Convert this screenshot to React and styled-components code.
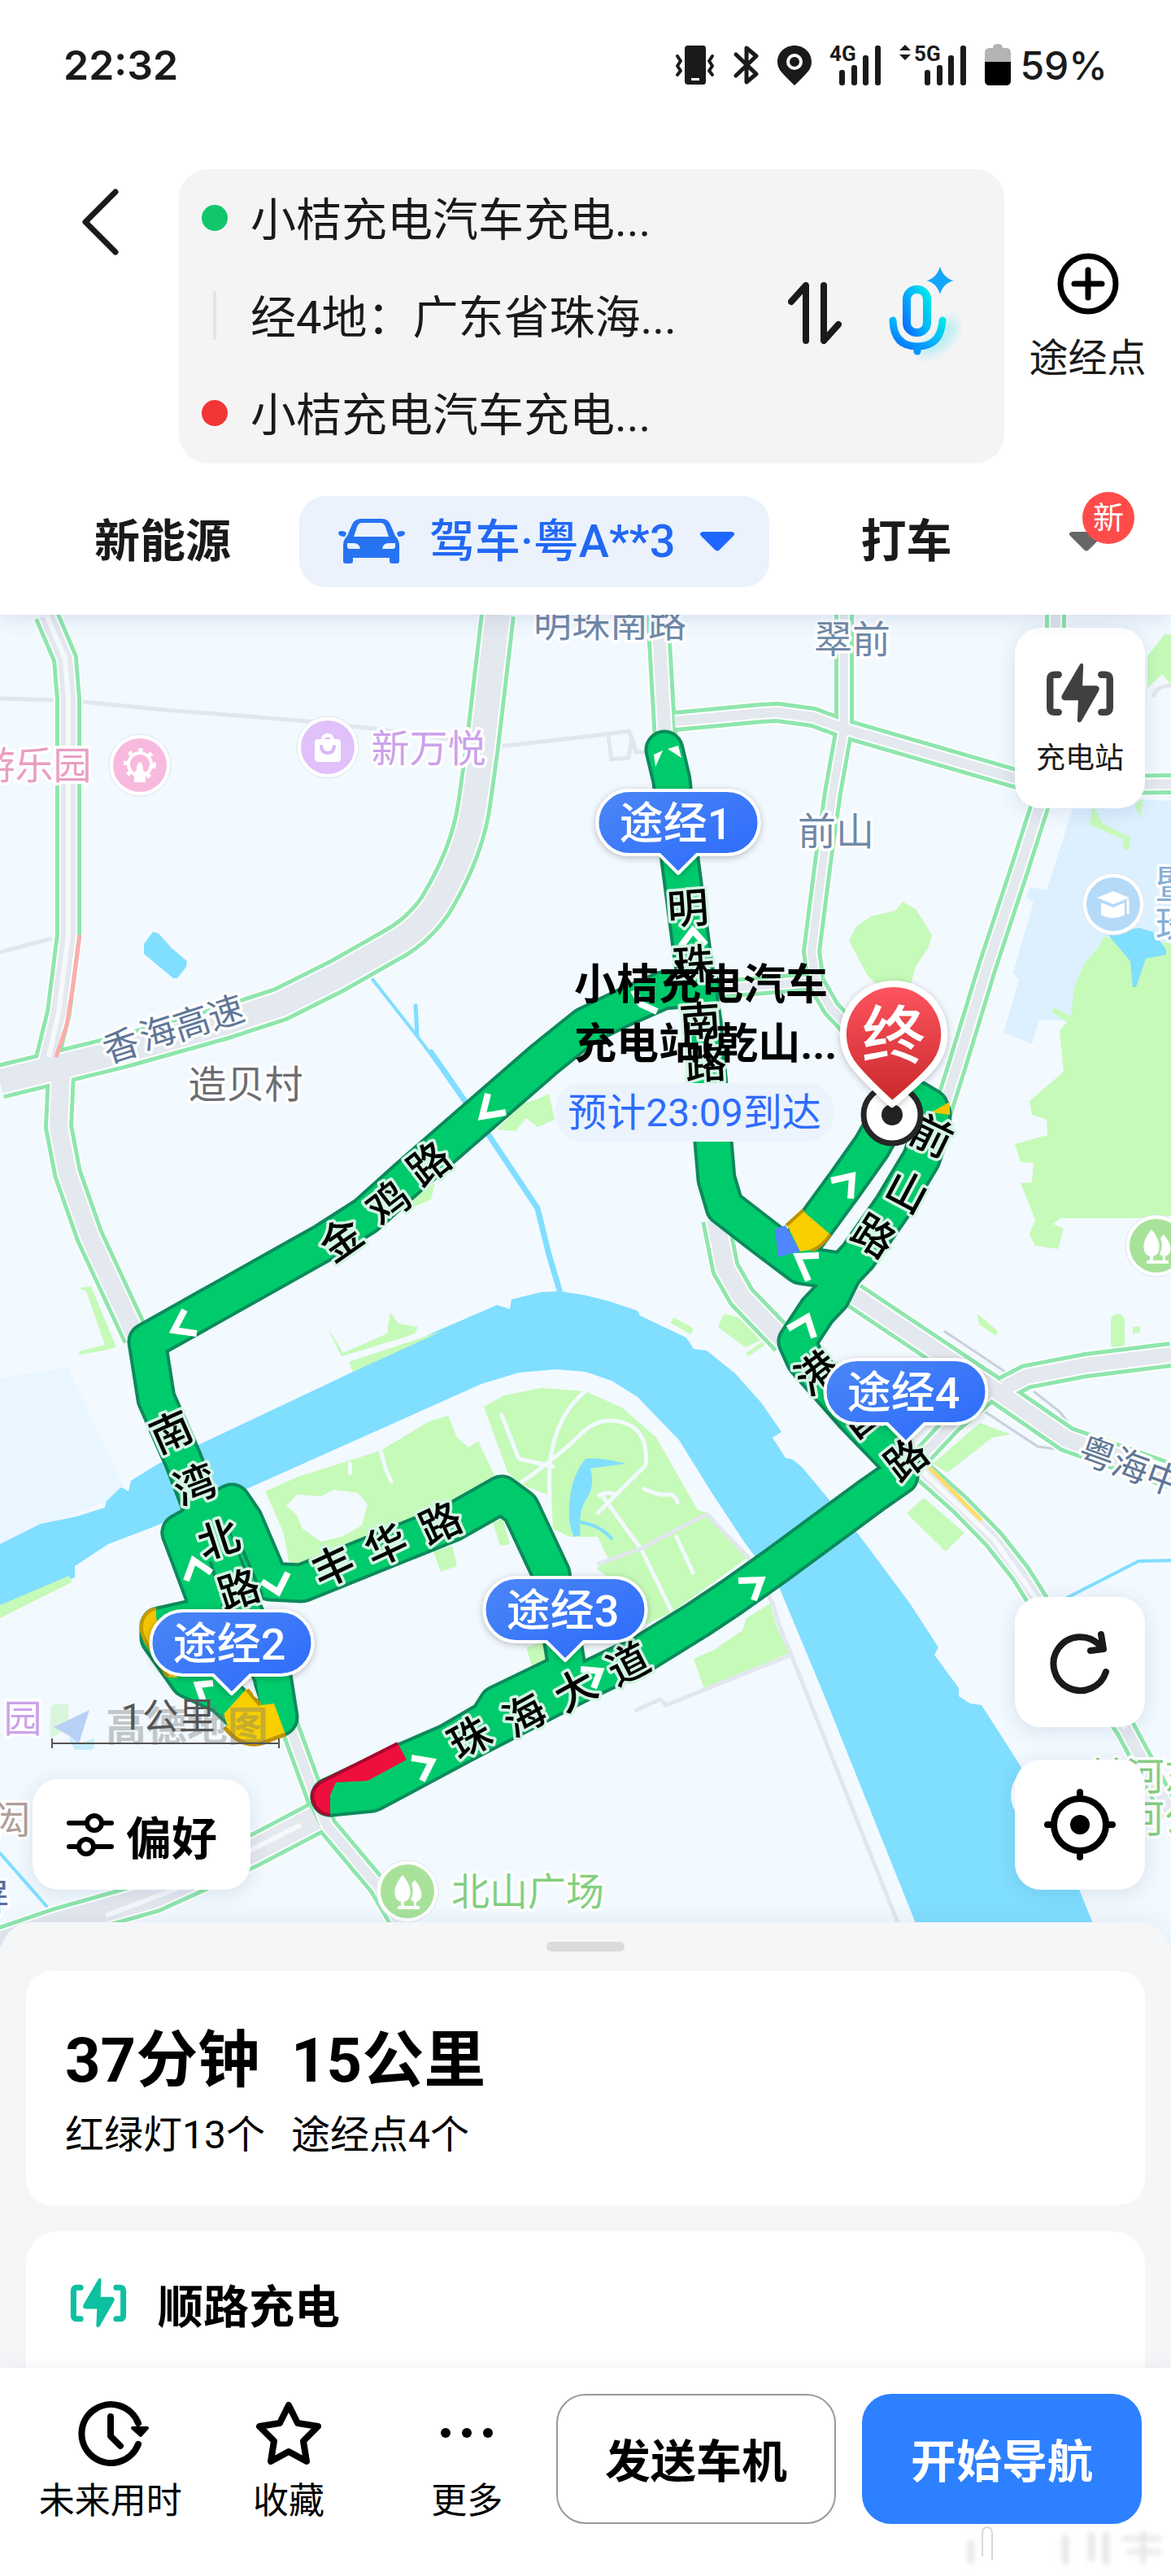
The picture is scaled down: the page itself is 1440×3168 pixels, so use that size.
import styled, { createGlobalStyle } from "styled-components";

const GlobalStyle = createGlobalStyle`
  * {
    box-sizing: border-box;
  }
  body {
    margin: 0;
    background-color: #fff;
    color: #1a1a1a;
    font-family: Roboto, "Noto Sans CJK SC", sans-serif;
  }
  button {
    font-family: inherit;
    color: inherit;
    border: none;
    padding: 0;
    background: none;
    cursor: pointer;
  }
  svg {
    display: block;
    flex-shrink: 0;
  }
`;

const Page = styled.div`
  display: flex;
  flex-direction: column;
  min-height: 100vh;
`;

const Header = styled.header`
  position: relative;
  z-index: 2;
  background-color: #fff;
  padding-bottom: 34px;
  box-shadow: 0 4px 24px rgba(60, 90, 140, 0.16);
`;

// STATUS BAR
const StatusBar = styled.div`
  display: flex;
  justify-content: space-between;
  align-items: center;
  height: 160px;
  padding: 0 78px;
`;

const Clock = styled.time`
  font-family: Inter, sans-serif;
  font-size: 50px;
  font-weight: 600;
`;

const StatusIcons = styled.div`
  display: flex;
  align-items: center;
  gap: 22px;
`;

const Battery = styled.div`
  display: flex;
  align-items: center;
  gap: 10px;
  font-family: Inter, sans-serif;
  font-size: 48px;
  font-weight: 500;
`;

// ROUTE SEARCH
const SearchArea = styled.div`
  display: flex;
  margin-top: 48px;
  padding-left: 88px;
`;

const BackButton = styled.button`
  align-self: flex-start;
  width: 132px;
  padding: 24px 12px;
`;

const StopsBox = styled.div`
  flex: 1;
  display: flex;
  align-items: center;
  justify-content: space-between;
  background-color: #f4f4f4;
  border-radius: 36px;
  padding-right: 52px;
`;

const Stops = styled.ul`
  list-style: none;
  margin: 0;
  padding: 0 0 2px 28px;
`;

const Stop = styled.li`
  display: flex;
  align-items: center;
  gap: 28px;
  height: 120px;
`;

const StopMark = styled.span`
  width: 32px;
  height: 32px;
  border-radius: 50%;
  background-color: ${(props) => props.color};
`;

const StopLine = styled.span`
  width: 4px;
  height: 60px;
  margin: 0 14px;
  background-color: #e4e4e6;
`;

const StopName = styled.button`
  padding-top: 6px;
  font-size: 56px;
  line-height: 80px;
`;

const StopTools = styled.div`
  display: flex;
  align-items: center;
  gap: 56px;
  padding-bottom: 8px;
`;

const AddStop = styled.button`
  display: flex;
  flex-direction: column;
  align-items: center;
  gap: 20px;
  width: 205px;
  padding-top: 102px;
  font-size: 48px;
  line-height: 66px;
`;

// TRAVEL MODES
const Modes = styled.nav`
  display: flex;
  align-items: center;
  margin-top: 40px;
  padding: 0 82px 0 116px;
`;

const Mode = styled.button`
  font-size: 56px;
  font-weight: 700;
  line-height: 80px;
`;

const ActiveMode = styled(Mode)`
  display: flex;
  align-items: center;
  gap: 30px;
  height: 112px;
  margin: 0 112px 0 84px;
  padding: 0 42px 0 48px;
  border-radius: 32px;
  background-color: #ebf2fc;
  color: #2168f5;
  font-weight: 500;
`;

const MoreModes = styled.button`
  position: relative;
  width: 44px;
  margin-left: auto;
`;

const NewBadge = styled.span`
  position: absolute;
  left: 17px;
  bottom: 10px;
  width: 64px;
  height: 64px;
  border-radius: 50%;
  background-color: #ff4c4a;
  color: #fff;
  font-size: 38px;
  line-height: 64px;
  text-align: center;
`;

// MAP
const MapSection = styled.main`
  position: relative;
  flex: 1;
  min-height: 1200px;
  overflow: hidden;
  background-color: #f2f9ff;
`;

const MapCanvas = styled.svg`
  position: absolute;
  inset: 0;
  width: 100%;
  height: 100%;
`;

const FloatCard = styled.button`
  display: flex;
  flex-direction: column;
  align-items: center;
  justify-content: center;
  gap: 16px;
  width: 160px;
  height: ${(props) => (props.$tall ? "222px" : "160px")};
  padding-top: ${(props) => (props.$tall ? "8px" : "0")};
  border-radius: 32px;
  background-color: #fff;
  box-shadow: 0 4px 24px rgba(60, 80, 120, 0.14);
  font-size: 36px;
  line-height: 52px;
`;

const TopTools = styled.div`
  position: absolute;
  top: 16px;
  right: 32px;
`;

const SideTools = styled.div`
  position: absolute;
  right: 32px;
  bottom: 76px;
  display: flex;
  flex-direction: column;
  gap: 40px;
`;

const PreferButton = styled.button`
  position: absolute;
  left: 40px;
  bottom: 76px;
  display: flex;
  align-items: center;
  justify-content: center;
  gap: 14px;
  width: 268px;
  height: 136px;
  border-radius: 32px;
  background-color: #fff;
  box-shadow: 0 4px 24px rgba(60, 80, 120, 0.14);
  font-size: 56px;
  font-weight: 700;
  color: #000;
`;

// BOTTOM SHEET
const Sheet = styled.section`
  position: relative;
  margin-top: -36px;
  height: 548px;
  padding: 24px 32px 0;
  border-radius: 40px 40px 0 0;
  background-color: #f5f6f8;
  box-shadow: 0 -4px 24px rgba(60, 90, 140, 0.08);
  overflow: hidden;
  color: #000;
`;

const Handle = styled.div`
  width: 96px;
  height: 12px;
  margin: 0 auto 24px;
  border-radius: 6px;
  background-color: #dadbdd;
`;

const Summary = styled.div`
  display: flex;
  gap: 32px;
  height: 288px;
  padding: 56px 48px;
  border-radius: 32px;
  background-color: #fff;
`;

const SummaryItem = styled.div`
  h2 {
    margin: 0;
    font-size: 76px;
    font-weight: 700;
    line-height: 108px;
  }
  p {
    margin: 4px 0 0;
    font-size: 48px;
    line-height: 68px;
  }
`;

const ChargeCard = styled.div`
  display: flex;
  align-items: center;
  gap: 38px;
  margin-top: 32px;
  height: 176px;
  padding: 0 54px;
  border-radius: 40px 40px 0 0;
  background-color: #fff;
  h3 {
    margin: 0;
    font-size: 56px;
    font-weight: 700;
  }
`;

const Footer = styled.footer`
  position: relative;
  display: flex;
  align-items: flex-start;
  height: 256px;
  padding: 32px 36px 0 26px;
  background-color: #fff;
  box-shadow: 0 -4px 20px rgba(60, 80, 120, 0.06);
  color: #000;
`;

const Actions = styled.div`
  flex: 1;
  display: flex;
`;

const Action = styled.button`
  flex: 1;
  display: flex;
  flex-direction: column;
  align-items: center;
  gap: 4px;
  font-size: 44px;
  line-height: 64px;
`;

const MainButton = styled.button`
  width: 344px;
  height: 160px;
  margin-left: ${(props) => (props.$primary ? "32px" : "0")};
  padding-bottom: 4px;
  border: 2px solid ${(props) => (props.$primary ? "#2d80ff" : "#999")};
  border-radius: 36px;
  background-color: ${(props) => (props.$primary ? "#2d80ff" : "#fff")};
  color: ${(props) => (props.$primary ? "#fff" : "#000")};
  font-size: 56px;
  font-weight: 700;
`;

const Smudge = styled.svg`
  position: absolute;
  right: 0;
  bottom: 8px;
`;

// ICONS
const Signal = ({ label, arrows }) => (
  <svg width={arrows ? 82 : 64} height="52" fill="#1a1a1a" overflow="visible">
    <text
      x={arrows ? 18 : 0}
      y="21"
      fontFamily="Roboto, sans-serif"
      fontWeight="700"
      fontSize="26"
    >
      {label}
    </text>
    {arrows && <path d="M0 8l7-7 7 7zM0 13l7 7 7-7z" />}
    <g transform={`translate(${arrows ? 31 : 12} 2)`}>
      <rect x="0" y="30" width="7" height="19" rx="3" />
      <rect x="15" y="24" width="7" height="25" rx="3" />
      <rect x="29" y="12" width="7" height="37" rx="3" />
      <rect x="44" y="0" width="7" height="49" rx="3" />
    </g>
  </svg>
);

const ChargeIcon = ({ size, color }) => (
  <svg width={size} height={size * 0.9} viewBox="0 0 80 72">
    <g fill="none" stroke={color} strokeWidth="8" strokeLinecap="round">
      <path d="M15 14h-5q-5 0-5 5v34q0 5 5 5h5" />
      <path d="M65 14h5q5 0 5 5v34q0 5-5 5h-5" />
    </g>
    <path
      d="M40 2q3-3 4 1l-1 24h16q5 1 3 6L42 68q-3 4-5 0l1-24H22q-5-1-3-6z"
      fill={color}
    />
  </svg>
);

// MAP DATA
const roads = [
  { w: 32, d: "M57 756L80 810 84 860 84 1150 72 1245 56 1310" },
  {
    w: 44,
    d: "M612 756L593 918 583 990Q574 1050 535 1114Q514 1145 480 1163L415 1200 345 1235 275 1258 150 1293 0 1330",
  },
  { w: 36, d: "M75 1320L72 1386 83 1443 110 1520 168 1645" },
  { w: 30, d: "M809 756L818 910" },
  {
    w: 26,
    d: "M830 887L936 877 956 876 1000 882 1038 896 1248 957 1290 966 1440 964",
  },
  {
    w: 24,
    d: "M1038 756L1038 896 1024 975 1012 1060 998 1170 1003 1207 1022 1240 1050 1270",
  },
  { w: 24, d: "M890 1216L1000 1207" },
  { w: 26, d: "M1298 756L1298 880 1278 993 1253 1071 1214 1189 1178 1307 1155 1380" },
  { w: 36, d: "M880 1500L892 1560 912 1595 965 1650" },
  { w: 34, d: "M1050 1593L1150 1660 1228 1712 1312 1770 1440 1815" },
  { w: 32, d: "M1235 1707L1262 1693 1335 1679 1440 1666" },
  { w: 26, d: "M1125 1800L1170 1752 1215 1714" },
  { w: 28, d: "M1135 1810L1180 1850 1222 1893 1255 1935 1277 1970 1384 2126 1440 2230" },
  { w: 26, d: "M355 2120L388 2210 402 2245 465 2320 500 2380" },
  { w: 42, d: "M388 2236L308 2278 190 2332 70 2366 0 2390" },
];

const river =
  "0,1899 50,1874 94,1865 129,1854 131,1846 149,1829 158,1834 161,1821 195,1800 248,1775 411,1698 434,1687 537,1637 611,1605 627,1610 629,1598 666,1589 689,1588 720,1593 748,1600 784,1612 787,1618 844,1645 853,1659 869,1661 904,1689 936,1725 961,1761 950,1768 966,1793 975,1795 986,1804 1021,1846 1055,1886 1119,1972 1154,2026 1149,2035 1179,2076 1179,2086 1193,2095 1207,2097 1255,2172 1328,2326 1358,2400 1140,2400 1014,2086 959,1954 917,1899 878,1840 835,1771 784,1718 752,1698 720,1687 684,1684 638,1688 592,1702 308,1829 188,1878 133,1899 92,1926 92,1940 0,1974";

const parks = [
  "0,1974 85,1938 88,1946 0,1990",
  "96,1584 112,1582 143,1657 131,1660 98,1666 97,1662 129,1654 106,1588",
  "675,1345 682,1377 661,1386 647,1375 634,1391 611,1389 643,1357 660,1352",
  "535,1455 530,1475 505,1486 510,1471",
  "404,1636 409,1642 422,1664 476,1640 480,1614 490,1628 514,1632 510,1640 496,1645 420,1668",
  "429,1675 546,1636 434,1687",
  "326,1834 367,1816 468,1784 528,1748 551,1741 562,1768 576,1780 590,1771 608,1814 600,1850 551,1861 367,1925 355,1920 349,1886 337,1858",
  "595,1730 620,1716 666,1707 720,1711 766,1732 807,1768 858,1857 872,1861 920,1915 826,1983 795,1997 760,1950 734,1929 748,1917 735,1890 700,1890 680,1880 678,1840 640,1825 624,1810",
  "853,2040 878,2029 913,2005 918,1990 947,1972 955,2000 970,2033 866,2077",
  "533,1908 556,1901 562,1926 542,1933",
  "606,1872 618,1868 627,1899 615,1901",
  "647,2026 700,2008 700,2030 655,2050",
  "890,1616 913,1621 940,1646 917,1657 883,1632",
  "828,1620 853,1634 849,1641 825,1627",
  "941,1648 944,1652 920,1668 917,1664",
  "1202,1616 1227,1637 1225,1643 1204,1629",
  "1393,1632 1402,1631 1402,1639 1393,1640",
  "1147,1800 1205,1750 1243,1764 1220,1768 1165,1811",
  "1115,1861 1136,1842 1186,1885 1163,1908",
  "1110,1109 1126,1118 1146,1150 1142,1164 1126,1189 1119,1215 1083,1215 1067,1200 1044,1157 1053,1139 1071,1127 1101,1120",
  "1344,990 1356,1013 1390,1030 1388,1046 1381,1043 1381,1032 1340,1014",
  "1395,990 1402,1005 1406,982",
  "1440,780 1432,780 1411,807 1411,846 1429,829 1440,842",
  "1356,1152 1354,1161 1333,1186 1321,1214 1317,1250 1296,1239 1294,1245 1312,1257 1303,1268 1308,1318 1292,1332 1266,1354 1269,1371 1287,1377 1288,1396 1248,1407 1255,1429 1271,1430 1269,1454 1255,1455 1273,1500 1266,1518 1273,1532 1301,1536 1308,1511 1294,1505 1305,1498 1400,1498 1440,1495 1440,1160",
];

// every leg of the planned route, drawn as a casing and then a fill
const routeLegs = [
  "M817 922L826 960 836 1057 852 1179 864 1257 877 1404 881 1450 891 1484 940 1522 985 1556 1037 1564",
  "M862 1214L815 1218 765 1240 720 1262 669 1303 500 1450 450 1495 400 1527 181 1650 192 1720 225 1795 250 1860 285 1950 335 2061 343 2112 312 2122",
  "M222 1885L285 1848 300 1870 332 1945 371 1947 557 1872 617 1838 640 1855 678 1936 697 2050",
  "M222 1885L252 1965 250 1988 196 2000 196 2014 232 2065 275 2085 312 2120",
  "M406 2210L457 2205 571 2144 708 2073 795 2031 858 1992 900 1964 955 1925 1073 1838 1106 1815 1108 1800",
  "M406 2210L501 2165 552 2143 600 2115 612 2096 697 2055",
  "M1108 1800L1050 1740 990 1672 980 1650 1005 1612 1022 1594 1037 1564",
  "M1037 1564L1055 1545 1097 1485 1133 1425 1145 1390 1146 1370 1143 1362 1128 1353 1100 1365",
  "M985 1530L1005 1503 1038 1458 1072 1410 1090 1378",
];

const chevrons = [
  "837,1164 852,1144 868,1162",
  "779,1218 788,1235 808,1244",
  "600,1345 593,1373 622,1368",
  "227,1611 214,1636 242,1640",
  "1022,1452 1048,1446 1046,1474",
  "1007,1544 981,1545 994,1575",
  "969,1634 993,1620 1001,1645",
  "229,1944 238,1919 260,1934",
  "322,1945 342,1958 354,1934",
  "506,2162 531,2166 519,2190",
  "908,1944 936,1943 927,1968",
  "714,2053 738,2055 730,2076",
  "250,2092 243,2072 262,2070",
];

const routeNames = [
  ["明", 846, 1118, -4],
  ["珠", 853, 1187, -4],
  ["南", 861, 1257, -4],
  ["路", 868, 1309, -3],
  ["路", 528, 1432, -38],
  ["鸡", 478, 1480, -38],
  ["金", 420, 1525, -35],
  ["南", 211, 1762, -24],
  ["湾", 240, 1827, -21],
  ["北", 269, 1894, -18],
  ["路", 294, 1956, -18],
  ["丰", 410, 1927, -25],
  ["华", 475, 1901, -25],
  ["路", 542, 1874, -25],
  ["珠", 578, 2138, -29],
  ["海", 645, 2110, -29],
  ["大", 708, 2079, -29],
  ["道", 773, 2047, -27],
  ["前", 1145, 1398, 26],
  ["山", 1115, 1466, 28],
  ["路", 1074, 1521, 32],
  ["港", 1005, 1689, -36],
  ["昌", 1060, 1742, -38],
  ["路", 1115, 1795, -38],
];

const slantedNames = [
  ["香", 149, 1287, -18],
  ["海", 194, 1271, -18],
  ["高", 236, 1259, -18],
  ["速", 278, 1246, -18],
  ["粤", 1349, 1789, 20],
  ["海", 1390, 1804, 20],
  ["中", 1431, 1820, 20],
];

const places = [
  ["明珠南路", 750, 766, "#7189a8"],
  ["翠前", 1048, 786, "#7189a8"],
  ["前山", 1028, 1022, "#7189a8"],
  ["新万悦", 527, 920, "#cba2ea"],
  ["游乐园", 42, 941, "#ea9ec2"],
  ["造贝村", 302, 1333, "#6c6d72"],
  ["北山广场", 649, 2326, "#84cf80"],
  ["园", 28, 2113, "#cba2ea"],
  ["闳", 14, 2238, "#b0a09a"],
  ["屏", -12, 2333, "#5a6ea0"],
  ["暨", 1444, 1087, "#86aed6"],
  ["珠", 1444, 1137, "#86aed6"],
  ["前河东", 1408, 2184, "#86cf82"],
  ["前河公", 1408, 2236, "#86cf82"],
];

const waypoints = [
  ["途经1", 834, 970],
  ["途经2", 285, 1979],
  ["途经3", 695, 1938],
  ["途经4", 1114, 1670],
];

const Glyphs = ({ items, ...rest }) => (
  <g {...rest}>
    {items.map(([char, x, y, angle]) => (
      <text key={char + x} transform={`translate(${x} ${y}) rotate(${angle})`}>
        {char}
      </text>
    ))}
  </g>
);

const Waypoint = ({ name, x, y }) => (
  <g transform={`translate(${x} ${y})`} filter="url(#soft)">
    <path
      d="M-60 2H60a39 39 0 0 1 0 79H23L0 104-23 81H-60a39 39 0 0 1 0-79z"
      fill="url(#pinBlue)"
      stroke="#fff"
      strokeWidth="4"
      strokeLinejoin="round"
    />
    <text x="-3" y="43" fill="#fff" fontSize="54" fontWeight="500">
      {name}
    </text>
  </g>
);

const Poi = ({ x, y, color, children }) => (
  <g transform={`translate(${x} ${y})`}>
    <circle r="38" fill="#fff" stroke="#dde6ee" />
    <circle r="33" fill={color} />
    {children}
  </g>
);

const Trees = () => (
  <g fill="#fff">
    <path d="M-6-20q-12 14-9 26 2 7 9 7t9-7q3-12-9-26z" />
    <path d="M9-14q10 12 8 21-2 6-8 6-3 0-5-3 5-10 1-19z" />
    <path d="M-8 8h4v12h-4zM8 8h3v12H8zM-12 18h27v4h-27z" />
  </g>
);

const RouteMap = () => (
  <MapCanvas
    viewBox="0 756 1440 1644"
    preserveAspectRatio="xMidYMid slice"
    role="img"
    aria-label="驾车路线地图"
    fontFamily='Roboto, "Noto Sans CJK SC", sans-serif'
    textAnchor="middle"
    dominantBaseline="central"
  >
    <defs>
      <linearGradient id="pinBlue" x1="0" y1="0" x2="1" y2="1">
        <stop offset="0" stopColor="#4b87f6" />
        <stop offset="1" stopColor="#2b69fb" />
      </linearGradient>
      <linearGradient id="pinRed" x1="0" y1="0" x2="0" y2="1">
        <stop offset="0" stopColor="#ff5561" />
        <stop offset="1" stopColor="#c8282a" />
      </linearGradient>
      <filter id="soft" x="-20%" y="-20%" width="140%" height="150%">
        <feDropShadow dx="0" dy="2" stdDeviation="4" floodOpacity="0.25" />
      </filter>
    </defs>

    {/* land and water */}
    <polygon points="0,1695 83,1682 156,1836 0,1899" fill="#e9f6ff" />
    <polygon
      points="1324,980 1287,1095 1266,1091 1262,1104 1271,1109 1246,1196 1253,1205 1234,1270 1269,1284 1278,1254 1303,1255 1440,1255 1440,985"
      fill="#dcf0ff"
    />
    <polygon points={river} fill="#80deff" />
    <g fill="#c5fab8">
      {parks.map((points) => (
        <polygon key={points} points={points} />
      ))}
      <rect x="1366" y="1616" width="17" height="44" rx="8" />
    </g>
    <path
      d="M352 1852l13-14 30 2 15-8 30 4 12 14-7 26-25 14-25 6-23-16-8-18z"
      fill="#f2f9ff"
    />
    <path
      d="M468 1784l6 22 8 18M430 1798l1 16M616 1738l22 56M638 1794l44 10M590 1771l24 50M720 1711q-50 40-44 130M640 1824q50-36 74-60t54-14 26 52M794 1802l-60 60M741 1840l48 66 39 80M831 1888l22 48M735 1840q14-8 24 0M790 1830q20 10 30 8t14 12"
      fill="none"
      stroke="#f2f9ff"
      strokeWidth="5"
    />
    <path
      d="M770 1800q-34-8-50-6-18 22-20 58-2 22 6 38l8-2q-4-30 8-46 10-16 4-36z"
      fill="#80deff"
    />
    <g fill="none" stroke="#80deff" strokeLinecap="round">
      <path d="M457 1203L512 1273 540 1310" strokeWidth="4" />
      <path d="M511 1237L513 1273" strokeWidth="5" />
      <path d="M530 1294L601 1396 661 1486 675 1543 689 1590" strokeWidth="7" />
      <path d="M714 1872q24 4 38 20M0 2279L57 2344M1312 1965L1400 1920 1440 1919" strokeWidth="4" />
    </g>
    <polygon
      points="188,1146 195,1148 211,1166 230,1182 229,1189 218,1203 213,1203 177,1173 177,1161"
      fill="#80deff"
    />
    <polygon
      points="1363,1150 1400,1141 1418,1146 1434,1168 1434,1174 1409,1179 1397,1214 1393,1214 1390,1182"
      fill="#80deff"
    />

    {/* side streets */}
    <g fill="none" stroke="#e2e7ed" strokeWidth="5">
      <path d="M0 859L69 861M101 863L202 873 367 886 459 896 615 918 720 906 773 899 777 907 782 925 796 925M748 904l4 30 21-2 4-26M0 1171L64 1154" />
      <path d="M734 1924L789 1904 869 1862 922 1917 950 1972 959 2001 973 2035 1118 2400M973 2035L819 2097 812 2090 780 2104" />
      <path d="M1418 857q4-14 22-14" />
    </g>
    <g fill="none" stroke="#c8d0dc" strokeWidth="3">
      <path d="M1161 1637L1239 1689M1271 1711L1303 1736 1317 1754M1211 1736L1276 1779 1299 1782" />
    </g>

    {/* main roads */}
    <g fill="none" strokeLinejoin="round">
      {roads.map((road) => (
        <path key={road.d} d={road.d} stroke="#fff" strokeWidth={road.w + 4} />
      ))}
      {roads.map((road) => (
        <path key={road.d} d={road.d} stroke="#8fe6ae" strokeWidth={road.w} />
      ))}
      {roads.map((road) => (
        <path key={road.d} d={road.d} stroke="#fff" strokeWidth={road.w - 10} />
      ))}
      {roads.map((road) => (
        <path key={road.d} d={road.d} stroke="#e4e8ef" strokeWidth={road.w - 14} />
      ))}
      <path d="M98 1150L90 1211 82 1261 69 1300" stroke="#ffabab" strokeWidth="5" />
      <path d="M1138 1800L1207 1870" stroke="#ffdb6b" strokeWidth="5" />
      <path
        d="M57 756L80 810 84 860 84 1150 72 1245 60 1300M240 2310L370 2244M130 2356L240 2314M1135 1810L1222 1893 1277 1970 1384 2126"
        stroke="#f6f9fc"
        strokeWidth="6"
      />
    </g>

    {/* place labels */}
    <g fontSize="47" stroke="#fff" strokeWidth="7" strokeLinejoin="round" paintOrder="stroke">
      {places.map(([name, x, y, color]) => (
        <text key={name + y} x={x} y={y} fill={color}>
          {name}
        </text>
      ))}
      <Glyphs items={slantedNames} fill="#5f7797" fontSize="44" />
    </g>
    <Poi x={172} y={941} color="#f8b9de">
      <circle r="17" cy="-1" fill="none" stroke="#fff" strokeWidth="6" strokeDasharray="5 8" />
      <circle r="14" cy="-1" fill="none" stroke="#fff" strokeWidth="4" />
      <path d="M0-4q4 2 4 10l3 3v12H-7V9l3-3q0-8 4-10z" fill="#fff" />
    </Poi>
    <Poi x={403} y={919} color="#e0c1fa">
      <path d="M-16-6q0-4 4-4h4q1-7 8-7t8 7h4q4 0 4 4v20q0 4-4 4h-24q-4 0-4-4z" fill="#fff" />
      <path d="M-8-1q1 8 8 8t8-8" fill="none" stroke="#d9b8f6" strokeWidth="4" strokeLinecap="round" />
      <path d="M-4-10q0-2 4-2t4 2z" fill="#d9b8f6" />
    </Poi>
    <Poi x={1369} y={1112} color="#b5daf8">
      <path d="M0-16L20-8 0 0-20-8zM-15-2L0 4l14-6v15q-14 8-29 0z" fill="#fff" />
      <path d="M18-6v18" stroke="#fff" strokeWidth="3" />
    </Poi>
    <Poi x={1422} y={1532} color="#a8e29a">
      <Trees />
    </Poi>
    <Poi x={501} y={2326} color="#a8e29a">
      <Trees />
    </Poi>
    <circle cx="1282" cy="2208" r="39" fill="#fff" />

    {/* map brand under the scale */}
    <g opacity="0.6">
      <path d="M62 2102q0-6 6-6h16v28l-22 14z" fill="#c9f3c4" />
      <path d="M66 2124L110 2103 97 2144 84 2134z" fill="#8fb8f0" />
      <path d="M84 2136l14 8 18-6v8q0 6-6 6H92z" fill="#a8e4fb" />
    </g>

    {/* planned route */}
    <g fill="none" strokeLinejoin="round" strokeLinecap="round">
      {routeLegs.map((d) => (
        <path key={d} d={d} stroke="#0b8a5b" strokeWidth="49" />
      ))}
      {routeLegs.map((d) => (
        <path key={d} d={d} stroke="#00cb6c" strokeWidth="41" />
      ))}
      <path d="M259 1922l12 36M298 1905l24 56" stroke="#0b8a5b" strokeWidth="4" />
    </g>
    <path
      d="M192 1977Q172 1982 172 2002 172 2010 178 2020L204 2062 218 2064 192 1990z"
      fill="#f2c500"
    />
    <path
      d="M192 1978Q174 1983 174 2002 174 2010 180 2020L206 2062"
      fill="none"
      stroke="#c79a00"
      strokeWidth="4"
    />
    <polygon points="953,1511 966,1507 984,1539 957,1546" fill="#4f86ff" />
    <polygon points="968,1507 987,1489 1021,1518 1012,1528 998,1537 984,1539" fill="#f9cf00" />
    <path d="M967 1507L988 1488M1021 1518Q1012 1532 998 1538" stroke="#bd9200" strokeWidth="4" fill="none" />
    <polygon points="1145,1368 1168,1355 1168,1371" fill="#f2c500" />
    <polygon points="275,2108 303,2077 321,2097 337,2095 351,2133 321,2144 300,2145 284,2136" fill="#f9cf00" />
    <path d="M304 2078L320 2097M351 2133L321 2144Q296 2150 276 2124" stroke="#bd9200" strokeWidth="5" fill="none" />
    <polygon points="305,2066 308,2060 318,2090 312,2086" fill="#e8f0f2" />
    <path
      d="M489 2144L500 2164 452 2190 413 2192 406 2208 406 2232Q385 2228 385 2208 386 2197 396 2192z"
      fill="#ee0f3e"
    />
    <path d="M489 2144L396 2191Q384 2198 384 2210 387 2230 406 2232" stroke="#a8082e" strokeWidth="4" fill="none" />
    <g fill="none" stroke="#fff" strokeWidth="8">
      {chevrons.map((points) => (
        <polyline key={points} points={points} />
      ))}
    </g>
    <path d="M804 928L815 923 806 943zM821 921L834 917 838 932z" fill="#fff" />

    <Glyphs
      items={routeNames}
      fontSize="51"
      fontWeight="500"
      fill="#000"
      stroke="#d5f5e4"
      strokeWidth="7"
      strokeLinejoin="round"
      paintOrder="stroke"
    />

    <text x="230" y="2124" fontSize="50" fontWeight="700" fill="#777" opacity="0.38">
      高德地图
    </text>
    <text x="207" y="2111" fontSize="45" fill="#555">
      1公里
    </text>
    <path d="M64 2138v12M64 2144H343M343 2138v12" stroke="#555" strokeWidth="2" />

    {/* destination */}
    <circle cx="1097" cy="1371" r="35" fill="#fff" stroke="#262626" strokeWidth="7" />
    <circle cx="1097" cy="1371" r="13" fill="#222" />
    <g filter="url(#soft)">
      <path
        d="M1099 1210a62 62 0 0 1 52 96Q1138 1324 1097 1358 1058 1322 1047 1306A62 62 0 0 1 1099 1210z"
        fill="url(#pinRed)"
        stroke="#fff"
        strokeWidth="8"
        strokeLinejoin="round"
      />
    </g>
    <text x="1099" y="1275" fontSize="78" fontWeight="500" fill="#fff">
      终
    </text>
    <g fontSize="52" fontWeight="700" fill="#000" textAnchor="start">
      <text x="706" y="1211">
        小桔充电汽车
      </text>
      <text x="706" y="1284">
        充电站(乾山...
      </text>
    </g>
    <rect x="683" y="1332" width="342" height="72" rx="32" fill="#ebf4fd" />
    <text x="854" y="1368" fontSize="48" fill="#2e6bff">
      预计23:09到达
    </text>

    {waypoints.map(([name, x, y]) => (
      <Waypoint key={name} name={name} x={x} y={y} />
    ))}
  </MapCanvas>
);

const App = () => {
  return (
    <Page>
      <GlobalStyle />
      <Header>
        <StatusBar>
          <Clock>22:32</Clock>
          <StatusIcons>
            <svg width="50" height="50" fill="#1a1a1a">
              <path
                fillRule="evenodd"
                d="M16 1h19q3 0 3 4v40q0 4-3 4H16q-4 0-4-4V5q0-4 4-4zM20 41v3h10v-3z"
              />
              <path
                d="M3 14l4 6-4 6 4 6-4 5M46 14l-4 6 4 6-4 6 4 5"
                fill="none"
                stroke="#1a1a1a"
                strokeWidth="4"
                strokeLinejoin="round"
                strokeLinecap="round"
              />
            </svg>
            <svg width="32" height="50" fill="none" stroke="#1a1a1a" strokeWidth="5">
              <path d="M3 12l25 24-12 10V4l12 10L3 38" strokeLinejoin="round" strokeLinecap="round" />
            </svg>
            <svg width="42" height="50" fill="#1a1a1a">
              <path d="M21 1C9 1 0 10 0 21c0 10 7 15 21 29 14-14 21-19 21-29C42 10 33 1 21 1z" />
              <circle cx="21" cy="21" r="8" stroke="#fff" strokeWidth="4" />
            </svg>
            <Signal label="4G" />
            <Signal label="5G" arrows />
            <Battery>
              <svg width="34" height="52">
                <path d="M7 5h4q0-5 6-5t6 5h4q6 0 6 6v11H1V11q0-6 6-6z" fill="#b3b3b3" />
                <path d="M1 22h32v23q0 6-6 6H7q-6 0-6-6z" />
              </svg>
              59%
            </Battery>
          </StatusIcons>
        </StatusBar>

        <SearchArea>
          <BackButton aria-label="返回">
            <svg width="46" height="82" fill="none" stroke="#1a1a1a" strokeWidth="7">
              <path d="M42 4L5 41l37 37" strokeLinecap="round" strokeLinejoin="round" />
            </svg>
          </BackButton>
          <StopsBox>
            <Stops>
              <Stop>
                <StopMark color="#12c76b" />
                <StopName>小桔充电汽车充电...</StopName>
              </Stop>
              <Stop>
                <StopLine />
                <StopName>经4地：广东省珠海...</StopName>
              </Stop>
              <Stop>
                <StopMark color="#f23535" />
                <StopName>小桔充电汽车充电...</StopName>
              </Stop>
            </Stops>
            <StopTools>
              <button aria-label="交换起终点">
                <svg width="66" height="80" fill="none" stroke="#1a1a1a" strokeWidth="8">
                  <path d="M4 26L22 6v68M62 54L44 74V6" strokeLinecap="round" strokeLinejoin="round" />
                </svg>
              </button>
              <button aria-label="语音输入">
                <svg width="92" height="124" viewBox="0 0 92 124">
                  <defs>
                    <linearGradient id="mic" x1="0" y1="1" x2="1" y2="0">
                      <stop offset="0" stopColor="#0a6dff" />
                      <stop offset="0.5" stopColor="#05b4fb" />
                      <stop offset="1" stopColor="#00e6e6" />
                    </linearGradient>
                    <filter id="glow" x="-40%" y="-40%" width="180%" height="180%">
                      <feGaussianBlur stdDeviation="7" />
                    </filter>
                  </defs>
                  <path d="M40 108q34-4 40-38" stroke="#7fe6f2" strokeWidth="12" fill="none" filter="url(#glow)" opacity="0.7" />
                  <rect x="24" y="33" width="25" height="53" rx="12" fill="none" stroke="url(#mic)" strokeWidth="10" />
                  <path d="M7 71q1 32 30 32t31-32" fill="none" stroke="url(#mic)" strokeWidth="9" strokeLinecap="round" />
                  <path d="M37 104v5" stroke="#0796fd" strokeWidth="9" strokeLinecap="round" />
                  <path d="M65 0q3 20 22 22-19 2-22 22-3-20-22-22 19-2 22-22z" fill="#14a6fb" stroke="#f4f4f4" strokeWidth="2" />
                </svg>
              </button>
            </StopTools>
          </StopsBox>
          <AddStop>
            <svg width="78" height="78" fill="none" stroke="#000" strokeWidth="7">
              <circle cx="39" cy="39" r="34" />
              <path d="M22 39h34M39 22v34" strokeLinecap="round" />
            </svg>
            途经点
          </AddStop>
        </SearchArea>

        <Modes>
          <Mode>新能源</Mode>
          <ActiveMode>
            <svg width="82" height="56" fill="#2673f2">
              <path
                fillRule="evenodd"
                d="M28 0h26q7 0 10 7l6 14q5 5 5 12v19q0 3-3 3h-6q-3 0-3-3v-4H18v4q0 3-3 3H9q-3 0-3-3V33q0-7 5-12l6-14q3-7 11-7zM29 5q-4 0-6 5l-4 12h43l-4-12q-2-5-6-5zM11 30h8q7 0 8 7H14q-3 0-3-3zM70 30h-8q-7 0-8 7h13q3 0 3-3z"
              />
              <path d="M4 15q5 0 6 3l-2 4q-7 0-8-4 0-3 4-3zM78 15q-5 0-6 3l2 4q7 0 8-4 0-3-4-3z" />
            </svg>
            驾车·粤A**3
            <svg width="44" height="26">
              <path d="M4 1h36q5 1 2 5L25 23q-3 3-6 0L2 6q-3-4 2-5z" fill="#1f66ff" />
            </svg>
          </ActiveMode>
          <Mode>打车</Mode>
          <MoreModes aria-label="更多出行方式">
            <svg width="44" height="26">
              <path d="M4 1h36q5 1 2 5L25 23q-3 3-6 0L2 6q-3-4 2-5z" fill="#666" />
            </svg>
            <NewBadge>新</NewBadge>
          </MoreModes>
        </Modes>
      </Header>

      <MapSection>
        <RouteMap />
        <TopTools>
          <FloatCard $tall>
            <ChargeIcon size={84} color="#404040" />
            充电站
          </FloatCard>
        </TopTools>
        <PreferButton>
          <svg width="60" height="56" fill="none" stroke="#000" strokeWidth="6" strokeLinecap="round">
            <path d="M4 14h20M46 14h10M4 43h10M36 43h20" />
            <circle cx="35" cy="14" r="9" />
            <circle cx="25" cy="43" r="9" />
          </svg>
          偏好
        </PreferButton>
        <SideTools>
          <FloatCard aria-label="刷新路线">
            <svg width="76" height="80" fill="none" stroke="#1a1a1a" strokeWidth="8">
              <path d="M70 52A33 33 0 1 1 62 19M64 6l3 18-16 2" strokeLinecap="round" strokeLinejoin="round" />
            </svg>
          </FloatCard>
          <FloatCard aria-label="我的位置">
            <svg width="90" height="90" fill="none" stroke="#000" strokeWidth="8">
              <circle cx="45" cy="45" r="32" />
              <path d="M45 5v8M45 77v8M5 45h8M77 45h8" strokeLinecap="round" />
              <circle cx="45" cy="45" r="12" fill="#000" stroke="none" />
            </svg>
          </FloatCard>
        </SideTools>
      </MapSection>

      <Sheet>
        <Handle />
        <Summary>
          <SummaryItem>
            <h2>37分钟</h2>
            <p>红绿灯13个</p>
          </SummaryItem>
          <SummaryItem>
            <h2>15公里</h2>
            <p>途经点4个</p>
          </SummaryItem>
        </Summary>
        <ChargeCard>
          <ChargeIcon size={70} color="#0cc0a0" />
          <h3>顺路充电</h3>
        </ChargeCard>
      </Sheet>

      <Footer>
        <Actions>
          <Action>
            <svg width="96" height="96" fill="none" stroke="#000" strokeWidth="8">
              <path d="M82 62A36 36 0 1 1 82 36" strokeLinecap="round" />
              <path d="M48 28v24l12 12" strokeLinecap="round" strokeLinejoin="round" />
              <path d="M75 42h18l-8 9z" fill="#000" strokeWidth="4" strokeLinejoin="round" />
            </svg>
            未来用时
          </Action>
          <Action>
            <svg width="96" height="96" fill="none" stroke="#000" strokeWidth="8">
              <path
                d="M48 14l11 22 25 4-18 18 4 25-22-12-22 12 4-25-18-18 25-4z"
                strokeLinejoin="round"
              />
            </svg>
            收藏
          </Action>
          <Action>
            <svg width="96" height="96" fill="#000">
              <circle cx="22" cy="48" r="6" />
              <circle cx="48" cy="48" r="6" />
              <circle cx="74" cy="48" r="6" />
            </svg>
            更多
          </Action>
        </Actions>
        <MainButton>发送车机</MainButton>
        <MainButton $primary>开始导航</MainButton>
        <Smudge width="270" height="56" fill="none">
          <defs>
            <filter id="smear">
              <feGaussianBlur stdDeviation="3" />
            </filter>
          </defs>
          <g stroke="#e2e2e2" filter="url(#smear)">
            <path d="M24 48V20M140 14v36M172 10v36M190 10v40" strokeWidth="7" />
            <path d="M210 18h48M216 34h42M236 8v42" strokeWidth="5" />
          </g>
          <path d="M38 40V12q0-8 6-8t6 8v32" stroke="#d8d8d8" strokeWidth="2" />
        </Smudge>
      </Footer>
    </Page>
  );
};

export default App;
